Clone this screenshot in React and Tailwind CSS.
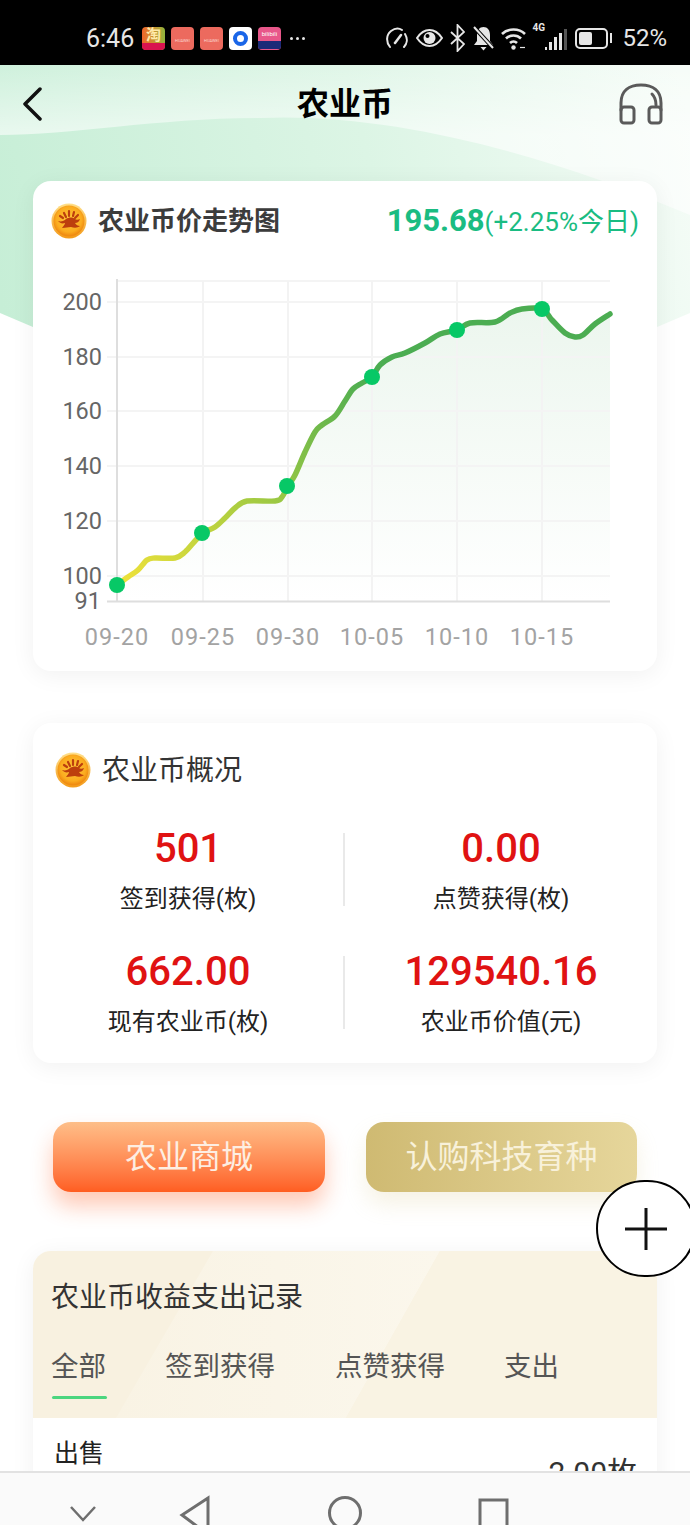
import React from 'react';

// price line points, in page coordinates
const pts = [
    [117, 585], [128, 577], [138, 570], [147, 560], [155, 558], [175, 558], [185, 552], [195, 541], [203, 533],
    [215, 527], [225, 518], [235, 508], [247, 501], [275, 501], [282, 497], [288, 486], [295, 475], [305, 452],
    [315, 432], [322, 425], [335, 416], [345, 401], [353, 389], [362, 383], [372, 377], [380, 365], [392, 357], [405, 353],
    [425, 343], [440, 334], [457, 330], [470, 323], [495, 322], [510, 313], [522, 309], [542, 309], [552, 320],
    [565, 333], [575, 337], [583, 335], [595, 324], [610, 314],
];

function smooth(list) {
    let d = 'M' + list[0][0] + ' ' + list[0][1];
    for (let i = 0; i < list.length - 1; i++) {
        const p0 = list[i - 1] || list[i];
        const p1 = list[i];
        const p2 = list[i + 1];
        const p3 = list[i + 2] || p2;
        const c1x = p1[0] + (p2[0] - p0[0]) / 6;
        const c1y = p1[1] + (p2[1] - p0[1]) / 6;
        const c2x = p2[0] - (p3[0] - p1[0]) / 6;
        const c2y = p2[1] - (p3[1] - p1[1]) / 6;
        d += ` C${c1x} ${c1y} ${c2x} ${c2y} ${p2[0]} ${p2[1]}`;
    }
    return d;
}

function Coin({ className }) {
    return (
        <svg viewBox="0 0 36 36" className={className}>
            <defs>
                <radialGradient id="coinFill" cx="50%" cy="45%" r="52%">
                    <stop offset="0%" stopColor="#ffc93c" />
                    <stop offset="78%" stopColor="#fbac1f" />
                    <stop offset="100%" stopColor="#f08c12" />
                </radialGradient>
                <linearGradient id="coinRim" x1="0" y1="0" x2="0" y2="1">
                    <stop offset="0%" stopColor="#ffe08a" />
                    <stop offset="100%" stopColor="#f39a18" />
                </linearGradient>
            </defs>
            <circle cx="18" cy="18" r="17.500" fill="url(#coinRim)" />
            <circle cx="18" cy="18" r="15.500" fill="url(#coinFill)" />
            <path d="M7 18c3 1 6 0 8-2 3-2 7-2 9 0 1 1 3 1 5 0-1 3-3 4-5 4 1 2 3 3 5 3-2 2-6 2-9 1-3 0-5 1-9 1 1-2 3-3 3-5-3 1-5 0-7-2z" fill="#bd3f0d" />
            <path d="M13 10l2 4M18 8v5M23 9l-1 4M27 12l-3 3M9 13l3 2" stroke="#bd3f0d" strokeWidth="2.200" strokeLinecap="round" />
        </svg>
    );
}

function AppTile({ className, children }) {
    return <div className={'w-[23px] h-[23px] rounded-[4px] flex flex-col items-center justify-center overflow-hidden ' + className}>{children}</div>;
}

function StatusBar() {
    return (
        <div className="relative h-[65px] bg-black flex items-center justify-between pl-[86px] pr-[23px] pt-[11px] text-[#e6e6e6]">
            <div className="flex items-center">
                <span className="text-[25px] leading-none w-[56px]">6:46</span>
                <AppTile className="bg-gradient-to-r from-[#f0632a] to-[#8fb53c] text-[#ffe9a8]">
                    <span className="text-[15px] leading-[16px] font-bold">淘</span>
                    <span className="w-full h-[7px] bg-[#d9134f]"></span>
                </AppTile>
                <div className="flex items-center gap-[6px] ml-[6px]">
                    <AppTile className="bg-[#ec6a5e] text-[#fbd5d0]">
                        <span className="text-[4px] leading-none mt-[5px]">HUAWEI</span>
                    </AppTile>
                    <AppTile className="bg-[#ec6a5e] text-[#fbd5d0]">
                        <span className="text-[4px] leading-none mt-[5px]">HUAWEI</span>
                    </AppTile>
                    <AppTile className="bg-white">
                        <span className="w-[15px] h-[15px] rounded-full border-[4px] border-[#1a66e8]"></span>
                    </AppTile>
                    <AppTile className="bg-[#e8578a] text-white">
                        <span className="text-[6px] leading-[14px]">bilibili</span>
                        <span className="w-full h-[8px] bg-[#1b2a78]"></span>
                    </AppTile>
                </div>
                <div className="flex gap-[3px] ml-[9px]">
                    <span className="w-[3px] h-[3px] rounded-full bg-[#e6e6e6]"></span>
                    <span className="w-[3px] h-[3px] rounded-full bg-[#e6e6e6]"></span>
                    <span className="w-[3px] h-[3px] rounded-full bg-[#e6e6e6]"></span>
                </div>
            </div>
            <div className="flex items-center">
                <svg width="24" height="24" viewBox="0 0 24 24" fill="none" stroke="#e6e6e6" strokeWidth="2" strokeLinecap="round">
                    <path d="M5 21C1 16 1 9 6 5c4-3 8-3 11-1M20 8c3 5 2 10-1 13" />
                    <path d="M10 17l6-8" strokeWidth="2.500" />
                </svg>
                <svg width="27" height="20" viewBox="0 0 27 20" fill="none" className="ml-[7px]">
                    <path d="M1 10C5 4 9 2 13.500 2S22 4 26 10c-4 6-8 8-12.500 8S5 16 1 10z" stroke="#e6e6e6" strokeWidth="2" />
                    <circle cx="13.500" cy="10" r="6" fill="#e6e6e6" />
                    <circle cx="11.500" cy="8" r="2" fill="#000" />
                </svg>
                <svg width="15" height="28" viewBox="0 0 15 28" fill="none" stroke="#e6e6e6" strokeWidth="1.800" className="ml-[7px]">
                    <path d="M1 8l13 12-6.500 7V1L14 8 1 20" />
                </svg>
                <svg width="21" height="25" viewBox="0 0 21 25" className="ml-[8px]">
                    <path d="M10.500 1c4 0 6.500 3 6.500 8v6l3 4H1l3-4V9c0-5 2.500-8 6.500-8z" fill="#e6e6e6" />
                    <path d="M7.500 21h6l-3 3.500z" fill="#e6e6e6" />
                    <path d="M1 1l19 21" stroke="#000" strokeWidth="4" />
                    <path d="M1 1l19 21" stroke="#e6e6e6" strokeWidth="2" />
                </svg>
                <svg width="25" height="24" viewBox="0 0 25 24" fill="none" stroke="#e6e6e6" strokeWidth="2.600" className="ml-[7px]">
                    <path d="M1 8c6-6 17-6 23 0M5 12.500c4-4 11-4 15 0M9 17c2-2 5-2 7 0" />
                    <circle cx="12.500" cy="21.500" r="2.200" fill="#e6e6e6" stroke="none" />
                    <path d="M19 21.500h5" strokeWidth="1.200" />
                </svg>
                <div className="relative w-[35px] h-[24px] ml-[6px]">
                    <span className="absolute left-0 top-[-4px] text-[10px] leading-[12px] font-bold">4G</span>
                    <div className="absolute right-0 bottom-0 flex items-end gap-[2px]">
                        <span className="w-[2px] h-[3px] bg-[#e6e6e6]"></span>
                        <span className="w-[3px] h-[8px] bg-[#e6e6e6]"></span>
                        <span className="w-[3px] h-[13px] bg-[#e6e6e6]"></span>
                        <span className="w-[3px] h-[17px] bg-[#e6e6e6]"></span>
                        <span className="w-[3px] h-[21px] bg-[#555]"></span>
                    </div>
                </div>
                <div className="flex items-center ml-[8px]">
                    <div className="w-[33px] h-[21px] rounded-[5px] border-2 border-[#e6e6e6] p-[2px]">
                        <div className="w-[52%] h-full rounded-[2px] bg-[#e6e6e6]"></div>
                    </div>
                    <span className="w-[2px] h-[10px] ml-[2px] bg-[#e6e6e6]"></span>
                </div>
                <span className="text-[24px] leading-none ml-[10px]">52%</span>
            </div>
        </div>
    );
}

function Chart() {
    const xs = [117, 203, 288, 372, 457, 542];
    const dates = ['09-20', '09-25', '09-30', '10-05', '10-10', '10-15'];
    const ys = [[200, 302], [180, 357], [160, 411], [140, 466], [120, 521], [100, 576]];
    const dots = [[117, 585], [202, 533], [287, 486], [372, 377], [457, 330], [542, 309]];
    const line = smooth(pts);
    return (
        <svg viewBox="33 260 624 411" className="block w-[624px] h-[411px]">
            <defs>
                <linearGradient id="lineStroke" gradientUnits="userSpaceOnUse" x1="117" y1="585" x2="370" y2="380">
                    <stop offset="0%" stopColor="#f1e23a" />
                    <stop offset="50%" stopColor="#a3cb42" />
                    <stop offset="100%" stopColor="#4cad52" />
                </linearGradient>
                <linearGradient id="lineArea" x1="0" y1="0" x2="0" y2="1">
                    <stop offset="0%" stopColor="#ecf6ee" />
                    <stop offset="100%" stopColor="#ffffff" />
                </linearGradient>
            </defs>
            <path d={line + ' L610 601 L117 601 Z'} fill="url(#lineArea)" />
            <line x1="117" y1="281" x2="610" y2="281" stroke="#f4f4f4" strokeWidth="2" />
            {xs.slice(1).map((x) => (
                <line key={x} x1={x} y1="281" x2={x} y2="601" stroke="#f3f3f3" strokeWidth="2" />
            ))}
            {ys.map(([label, y]) => (
                <g key={label}>
                    <line x1="107" y1={y} x2="610" y2={y} stroke="#f4f4f4" strokeWidth="2" />
                    <text x="102" y={y + 8} textAnchor="end" fontSize="23.500" fill="#666" fontFamily="Roboto">{label}</text>
                </g>
            ))}
            <text x="101" y="609" textAnchor="end" fontSize="23.500" fill="#666" fontFamily="Roboto">91</text>
            <line x1="117" y1="279" x2="117" y2="601" stroke="#dedede" strokeWidth="2" />
            <line x1="107" y1="601.500" x2="610" y2="601.500" stroke="#dedede" strokeWidth="2" />
            <path d={line} fill="none" stroke="url(#lineStroke)" strokeWidth="5.500" strokeLinecap="round" strokeLinejoin="round" />
            {dots.map(([x, y]) => (
                <circle key={x} cx={x} cy={y} r="8" fill="#07c866" />
            ))}
            {xs.map((x, i) => (
                <text key={x} x={x} y="645" textAnchor="middle" fontSize="23.500" letterSpacing="1" fill="#a3a3a3" fontFamily="Roboto">{dates[i]}</text>
            ))}
        </svg>
    );
}

function Stat({ value, label, divider }) {
    return (
        <div className={'h-[73px] flex flex-col items-center ' + (divider ? 'border-r-2 border-[#e9e9e9]' : '')}>
            <div className="text-[40px] leading-[32px] font-medium text-[#e01212]">{value}</div>
            <div className="text-[24px] leading-[32px] mt-[18px] text-[#222] whitespace-nowrap">{label}</div>
        </div>
    );
}

function BottomNav() {
    return (
        <div className="absolute left-0 right-0 bottom-0 h-[54px] bg-[#fafafa] border-t-2 border-[#e2e2e2] overflow-hidden">
            <svg width="690" height="54" viewBox="0 1471 690 54" fill="none" stroke="#6e6e6e" strokeWidth="3">
                <path d="M71 1505l12 13 12-13" strokeWidth="2.500" />
                <path d="M208 1496v35h-2l-24-18z" />
                <circle cx="345" cy="1511" r="15.500" />
                <rect x="480" y="1498" width="27" height="28" />
            </svg>
        </div>
    );
}

export default function App() {
    return (
        <div className="relative w-[690px] h-[1525px] overflow-hidden bg-white font-[Roboto,'Noto_Sans_CJK_SC',sans-serif]">
            {/* header background, drawn behind the page */}
            <svg viewBox="0 65 690 300" className="absolute left-0 top-[65px] w-[690px] h-[300px]">
                <defs>
                    <linearGradient id="headerBg" gradientUnits="userSpaceOnUse" x1="0" y1="300" x2="690" y2="120">
                        <stop offset="0%" stopColor="#c6eed6" />
                        <stop offset="55%" stopColor="#dcf5e5" />
                        <stop offset="100%" stopColor="#f5fcf7" />
                    </linearGradient>
                    <linearGradient id="swoosh" gradientUnits="userSpaceOnUse" x1="0" y1="65" x2="0" y2="135">
                        <stop offset="0%" stopColor="#ffffff" stopOpacity="0.1" />
                        <stop offset="100%" stopColor="#ffffff" stopOpacity="0.6" />
                    </linearGradient>
                </defs>
                <path d="M0 65H690V313Q345 468 0 313Z" fill="url(#headerBg)" />
                <path d="M0 135C70 135 160 118 260 118C400 112 560 160 690 215V65H0Z" fill="url(#swoosh)" />
            </svg>

            <div className="relative">
                <StatusBar />

                <div className="relative h-[78px] flex items-center justify-between pl-[22px] pr-[27px]">
                    <svg width="20" height="34" viewBox="0 0 20 34" fill="none" stroke="#111" strokeWidth="3.500" strokeLinecap="round" strokeLinejoin="round">
                        <path d="M18 2L3 17l15 15" />
                    </svg>
                    <div className="absolute left-0 right-0 text-center text-[32px] leading-none font-bold text-black">农业币</div>
                    <svg width="44" height="42" viewBox="0 0 44 42" fill="none" stroke="#5a5a5a" strokeWidth="3" strokeLinecap="round" strokeLinejoin="round">
                        <path d="M2 27V20C2 8 10 2 22 2s20 6 20 18v7" />
                        <path d="M33 11c3 3 4 6 4 11" />
                        <rect x="2" y="24" width="13" height="16" rx="3" />
                        <rect x="30" y="24" width="12" height="16" rx="3" />
                    </svg>
                </div>

                {/* price card */}
                <div className="mx-[33px] mt-[38px] h-[490px] bg-white rounded-[18px] shadow-[0_4px_24px_rgba(0,0,0,0.06)] overflow-hidden">
                    <div className="h-[79px] flex items-center justify-between pl-[18px] pr-[18px]">
                        <div className="flex items-center">
                            <Coin className="w-[36px] h-[36px]" />
                            <span className="ml-[11px] text-[26px] leading-none font-bold text-[#3c3c3c]">农业币价走势图</span>
                        </div>
                        <div className="flex items-baseline text-[#1abc82]">
                            <span className="text-[31px] leading-none font-bold">195.68</span>
                            <span className="text-[26px] leading-none">(+2.25%今日)</span>
                        </div>
                    </div>
                    <Chart />
                </div>

                {/* overview card */}
                <div className="mx-[33px] mt-[52px] h-[340px] bg-white rounded-[18px] shadow-[0_4px_24px_rgba(0,0,0,0.06)]">
                    <div className="h-[110px] flex items-start pt-[29px] pl-[22px]">
                        <Coin className="w-[36px] h-[36px]" />
                        <span className="ml-[11px] text-[28px] leading-[38px] text-[#333]">农业币概况</span>
                    </div>
                    <div className="grid grid-cols-2 gap-y-[50px]">
                        <Stat value="501" label="签到获得(枚)" divider />
                        <Stat value="0.00" label="点赞获得(枚)" />
                        <Stat value="662.00" label="现有农业币(枚)" divider />
                        <Stat value="129540.16" label="农业币价值(元)" />
                    </div>
                </div>

                <div className="flex justify-between pl-[53px] pr-[53px] mt-[59px]">
                    <button className="w-[272px] h-[70px] rounded-[18px] bg-gradient-to-b from-[#fdbe88] to-[#ff5d20] text-[32px] text-[#fdeee2] shadow-[0_14px_22px_rgba(255,90,30,0.32)]">农业商城</button>
                    <button className="w-[271px] h-[70px] rounded-[18px] bg-gradient-to-r from-[#cfba72] to-[#e6d69b] text-[32px] text-[#f8f1da] shadow-[0_12px_22px_rgba(210,190,120,0.2)]">认购科技育种</button>
                </div>

                {/* records card */}
                <div className="mx-[33px] mt-[59px] rounded-t-[18px] overflow-hidden bg-white shadow-[0_4px_24px_rgba(0,0,0,0.06)]">
                    <div className="relative h-[167px] bg-[#f8f1e0]">
                        <svg viewBox="0 0 624 167" className="absolute left-0 top-0 w-[624px] h-[167px]">
                            <defs>
                                <linearGradient id="bandFill" x1="0" y1="0" x2="1" y2="0">
                                    <stop offset="0%" stopColor="#f9f3e4" />
                                    <stop offset="100%" stopColor="#fbf7ec" />
                                </linearGradient>
                            </defs>
                            <path d="M180 0H407L313 167H83Z" fill="url(#bandFill)" />
                            <path d="M407 0H624V167H313Z" fill="#f9f3e3" />
                        </svg>
                        <div className="relative pl-[18px] pt-[30px] text-[28px] leading-[34px] text-[#333]">农业币收益支出记录</div>
                        <div className="relative flex pl-[18px] mt-[35px] text-[27.500px] leading-[34px] text-[#555]">
                            <div className="w-[55px] whitespace-nowrap">全部</div>
                            <div className="ml-[59px]">签到获得</div>
                            <div className="ml-[60px]">点赞获得</div>
                            <div className="ml-[59px]">支出</div>
                        </div>
                        <div className="relative ml-[19px] mt-[12px] w-[55px] h-[3px] rounded-full bg-[#4cd67f]"></div>
                    </div>
                    <div className="relative h-[120px] flex justify-between pl-[21px] pr-[20px]">
                        <div className="pt-[20px] text-[25px] leading-[32px] text-[#222]">出售</div>
                        <div className="pt-[38px] text-[30px] leading-[34px] text-[#333]">2.00枚</div>
                    </div>
                </div>
            </div>

            {/* floating add button */}
            <div className="absolute left-[596px] top-[1180px] w-[100px] h-[97px] rounded-full bg-white border-2 border-black flex items-center justify-center">
                <svg width="42" height="42" viewBox="0 0 42 42" stroke="#111" strokeWidth="3">
                    <path d="M21 0v42M0 21h42" />
                </svg>
            </div>

            <BottomNav />
        </div>
    );
}
